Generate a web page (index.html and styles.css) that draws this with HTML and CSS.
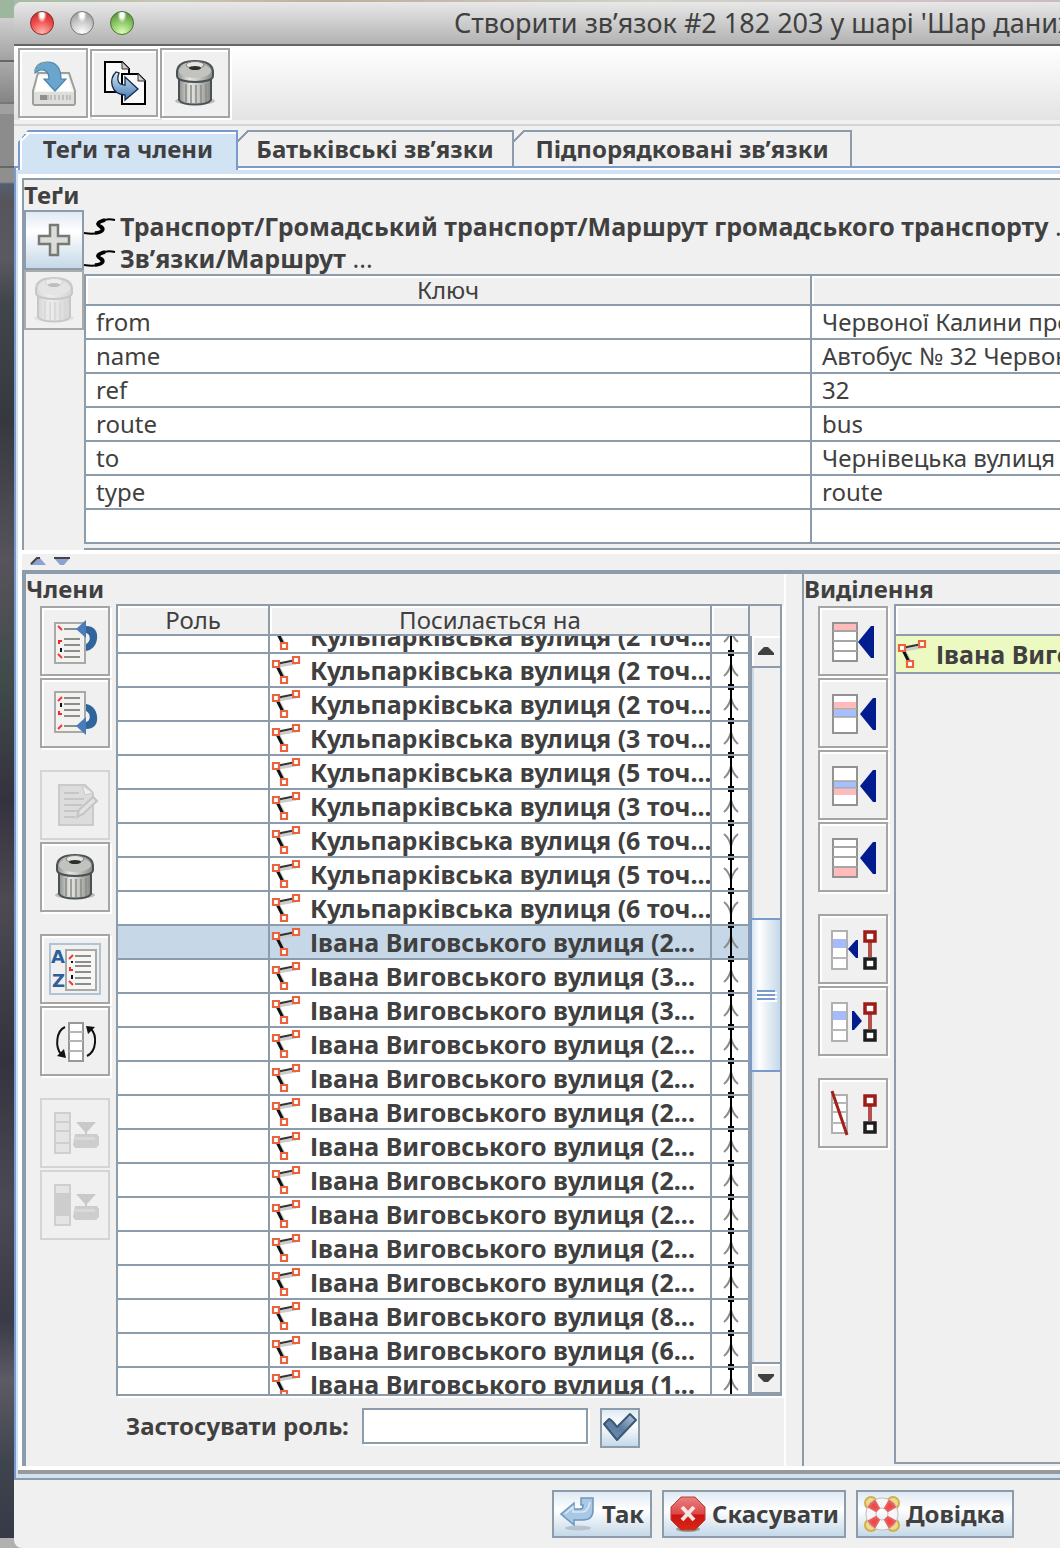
FILE: index.html
```html
<!DOCTYPE html>
<html lang="uk">
<head>
<meta charset="utf-8">
<title>Редактор зв’язків</title>
<link rel="stylesheet" href="styles.css">
</head>
<body>
<svg class="sprite" aria-hidden="true">
  <defs>
    <linearGradient id="metal" x1="0" x2="1" y1="0" y2="0"><stop offset="0" stop-color="#8d8f8a"/><stop offset=".35" stop-color="#e6e6e2"/><stop offset=".6" stop-color="#c8c9c4"/><stop offset="1" stop-color="#868883"/></linearGradient>
    <linearGradient id="blueArrow" x1="0" x2="0" y1="0" y2="1"><stop offset="0" stop-color="#dbe7f4"/><stop offset="1" stop-color="#3f78b4"/></linearGradient>
    <linearGradient id="redSign" x1="0" x2="0" y1="0" y2="1"><stop offset="0" stop-color="#e98080"/><stop offset=".5" stop-color="#dc4a4a"/><stop offset=".55" stop-color="#cc1414"/><stop offset="1" stop-color="#d62a10"/></linearGradient>
    <linearGradient id="tick" x1="1" x2="0" y1="0" y2="1"><stop offset="0" stop-color="#b5cbe0"/><stop offset=".5" stop-color="#5c7da0"/><stop offset="1" stop-color="#6f90b8"/></linearGradient>
  </defs>
  <symbol id="i-save" viewBox="0 0 48 48">
    <path d="M9 14H40L46 32V44Q46 46 44 46H6Q4 46 4 44V32Z" fill="#f4f4f3" stroke="#9d9f9a" stroke-width="2"/>
    <path d="M5 33H45V45H5Z" fill="#dededc"/><path d="M9 17H38L43 32H7Z" fill="#fff"/>
    <path d="M11 36h7v5h-7z" fill="#8f8f8d"/><path d="M19 36v5M22 36v5M26 36v5M30 36v5M34 36v5M38 36v5M41 36v5" stroke="#b2b2b0" stroke-width="1.5"/>
    <path d="M6 14C6 6 12 3 18 3C28 3 32 9 32 20H37L26 32L15 20H20C20 13 16 10 12 11C9 11 8 13 6 14Z" fill="#69a5cd" stroke="#4984b0" stroke-width="1.2"/>
    <path d="M6 12C8 5 13 3 18 4" fill="none" stroke="#8aa59c" stroke-width="2" stroke-dasharray="3 2"/>
  </symbol>
  <symbol id="i-copy" viewBox="0 0 48 48">
    <path d="M5 3H22L29 10V33H5Z" fill="#fafafa" stroke="#000" stroke-width="2"/><path d="M22 3V10H29" fill="#ccc" stroke="#333"/>
    <path d="M22 15H38L45 22V45H22Z" fill="#fafafa" stroke="#000" stroke-width="2"/><path d="M38 15V22H45" fill="#ccc" stroke="#333"/>
    <path d="M16 13C9 20 10 35 25 36V41L38 30L25 18V26C19 26 16 22 19 14Z" fill="url(#blueArrow)" stroke="#122c4a" stroke-width="1.3"/>
  </symbol>
  <symbol id="i-trash" viewBox="0 0 48 48">
    <ellipse cx="24" cy="42" rx="20" ry="4" fill="#000" opacity=".22"/>
    <path d="M8 18L8 41C12 47 36 47 40 41L40 18Z" fill="url(#metal)" stroke="#4a5256" stroke-width="2"/>
    <path d="M15 25V43M20 26V44M25 26V44M30 26V44M35 25V43" stroke="#8c8e89" stroke-width="1.6"/>
    <path d="M6 12C7 4 16 2 24 2S41 4 42 12V17C42 21 33 23 24 23S6 21 6 17Z" fill="url(#metal)" stroke="#4a5256" stroke-width="2"/>
    <ellipse cx="24" cy="12" rx="16" ry="7" fill="#c2c3be"/><ellipse cx="24" cy="6" rx="9" ry="3.500" fill="#e4e4e1" stroke="#7a7c77" stroke-width="1"/><ellipse cx="24" cy="9" rx="6" ry="2" fill="#2d2f2d"/>
  </symbol>
  <symbol id="i-plus" viewBox="0 0 48 48">
    <path d="M20 9h8v11h11v8H28v11h-8V28H9v-8h11z" fill="#dcdcd8" stroke="#777974" stroke-width="2.500"/>
  </symbol>
  <symbol id="i-route" viewBox="0 0 32 20">
    <path d="M0 17C6 18 14 18 17 15S10 9 15 6S27 3 31 4" fill="none" stroke="#000" stroke-width="2"/><path d="M11 17C21 16 20 12 16 10C12 8 14 6 21 4" fill="none" stroke="#000" stroke-width="3.500"/>
  </symbol>
  <symbol id="i-sheet" viewBox="0 0 48 48">
    <path d="M4 6H34V46H4Z" fill="#f2f3f0" stroke="#a9aaa6" stroke-width="2"/>
    <path d="M13 12H29M13 22H29M13 28H29M13 34H29M13 40H29" stroke="#8c8e89" stroke-width="2"/>
    <path d="M7 9l4 4M7 37l4 4" stroke="#f33" stroke-width="2"/><path d="M8 27v-3h3" stroke="#f22" stroke-width="2" fill="none"/><path d="M10 31v4" stroke="#111" stroke-width="2"/>
  </symbol>
  <symbol id="i-up" viewBox="0 0 48 48">
    <use href="#i-sheet" width="48" height="48"/>
    <path d="M35 9C44 9 47 15 46 22C45 29 41 33 35 34V27C40 25 40 17 35 16Z" fill="#2f649c"/><path d="M25 12L35 3V21Z" fill="#4b7cb5"/>
  </symbol>
  <symbol id="i-down" viewBox="0 0 48 48">
    <g transform="matrix(1 0 0 -1 0 49)"><use href="#i-up" width="48" height="48"/></g>
  </symbol>
  <symbol id="i-edit" viewBox="0 0 48 48">
    <path d="M8 4H34L42 12V44H8Z" fill="#dcdcdc" stroke="#cacaca" stroke-width="2"/>
    <path d="M13 12h15M13 18h20M13 24h18M13 30h15M13 36h11" stroke="#c6c6c6" stroke-width="2"/><path d="M31 4L34 14L42 12Z" fill="#eee" stroke="#cacaca"/>
    <path d="M26 36L28 29L42 16L46 20L32 33Z" fill="#e2e2e2" stroke="#c4c4c4" stroke-width="2"/>
  </symbol>
  <symbol id="i-sort" viewBox="-2 -2 54 54">
    <path d="M0 0H50V50H0Z" fill="#f0f0f0" stroke="#b0c3d3" stroke-width="2"/>
    <text x="1" y="19" class="glyph">A</text><text x="2" y="43" class="glyph">Z</text>
    <path d="M16 6H46V46H16Z" fill="#f6f6f4" stroke="#a9aaa6" stroke-width="2"/>
    <path d="M25 12H41M25 18H41M25 22H41M25 28H41M25 34H41M25 40H41" stroke="#8c8e89" stroke-width="2"/>
    <path d="M19 15l4-4M19 37l4 4" stroke="#f33" stroke-width="2"/><path d="M20 23v3h3" stroke="#f22" stroke-width="2" fill="none"/><path d="M22 17v2M22 31v4" stroke="#111" stroke-width="2"/>
  </symbol>
  <symbol id="i-reverse" viewBox="0 0 48 48">
    <path d="M18 6H32V44H18Z" fill="#fff" stroke="#989898" stroke-width="2"/><path d="M18 15H32M18 24H32M18 34H32" stroke="#b5b5b5" stroke-width="2"/>
    <path d="M14 10C5 14 4 30 10 37M36 39C46 34 46 18 40 12" fill="none" stroke="#111" stroke-width="2"/><path d="M15 41L6 39L13 32ZM35 9L44 10L37 17Z" fill="#111"/>
  </symbol>
  <symbol id="i-dl" viewBox="0 0 48 48">
    <path d="M4 4H19V44H4Z" fill="#e4e4e4" stroke="#cfcfcf" stroke-width="2"/><path d="M4 13H19M4 22H19M4 34H19" stroke="#cfcfcf" stroke-width="2"/>
    <path d="M25 13H45L36 23V26H34V23Z" fill="#c9c9c9"/><path d="M24 25H46L48 28V36L45 39H24L22 36Z" fill="#cdcdcd"/><path d="M24 28H44V31H24Z" fill="#d9d9d9"/>
  </symbol>
  <symbol id="i-dl-all" viewBox="0 0 48 48">
    <use href="#i-dl" width="48" height="48"/><path d="M4 12H19V35H4Z" fill="#cdcdcd"/>
  </symbol>
  <symbol id="i-frame" viewBox="0 0 48 48"><path d="M4 6H28V44H4Z" fill="#fff" stroke="#939393" stroke-width="2"/></symbol>
  <symbol id="i-first" viewBox="0 0 48 48">
    <use href="#i-frame" width="48" height="48"/><path d="M5 7H27V13H5Z" fill="#fbb"/><path d="M4 14H28M4 24H28M4 34H28" stroke="#a5a5a5" stroke-width="2"/><path d="M29 25L42 9H45V41H42Z" fill="#001c8e"/>
  </symbol>
  <symbol id="i-before" viewBox="0 0 48 48">
    <use href="#i-frame" width="48" height="48"/><path d="M5 13H27V20H5Z" fill="#fbb"/><path d="M5 21H27V28H5Z" fill="#a8bfff"/><path d="M4 20H28M4 28H28" stroke="#a5a5a5" stroke-width="1.500"/><path d="M31 25L44 9H47V41H44Z" fill="#001c8e"/>
  </symbol>
  <symbol id="i-after" viewBox="0 0 48 48">
    <use href="#i-frame" width="48" height="48"/><path d="M5 20H27V27H5Z" fill="#a8bfff"/><path d="M5 28H27V34H5Z" fill="#fbb"/><path d="M4 20H28M4 27H28" stroke="#a5a5a5" stroke-width="1.500"/><path d="M31 25L44 9H47V41H44Z" fill="#001c8e"/>
  </symbol>
  <symbol id="i-last" viewBox="0 0 48 48">
    <use href="#i-frame" width="48" height="48"/><path d="M5 35H27V43H5Z" fill="#fbb"/><path d="M4 14H28M4 24H28M4 34H28" stroke="#a5a5a5" stroke-width="2"/><path d="M31 25L44 9H47V41H44Z" fill="#001c8e"/>
  </symbol>
  <symbol id="i-nodes" viewBox="0 0 48 48">
    <path d="M3 6H18V44H3Z" fill="#fff" stroke="#b0b0b0" stroke-width="2"/>
    <path d="M41 17V32" stroke="#b5504a" stroke-width="4"/><path d="M36 7H46V16H36Z" fill="#fff" stroke="#9c1d17" stroke-width="3.500"/><path d="M36 34H46V43H36Z" fill="#fff" stroke="#1d1d1d" stroke-width="3.500"/>
  </symbol>
  <symbol id="i-sel-members" viewBox="0 0 48 48">
    <use href="#i-nodes" width="48" height="48"/><path d="M4 14H17V23H4Z" fill="#a5bbfb"/><path d="M3 33H18" stroke="#b8b8b8" stroke-width="2"/><path d="M19 24L27 15H29V33H27Z" fill="#001c8e"/>
  </symbol>
  <symbol id="i-sel-objects" viewBox="0 0 48 48">
    <use href="#i-nodes" width="48" height="48"/><path d="M4 14H17V23H4Z" fill="#a5bbfb"/><path d="M3 33H18" stroke="#b8b8b8" stroke-width="2"/><path d="M33 24L25 14H23V33H25Z" fill="#001c8e"/>
  </symbol>
  <symbol id="i-remove" viewBox="0 0 48 48">
    <use href="#i-nodes" width="48" height="48"/><path d="M3 14H18M3 23H18M3 34H18" stroke="#b8b8b8" stroke-width="2"/><path d="M3 2L18 46" stroke="#a3211c" stroke-width="3"/>
  </symbol>
  <symbol id="i-way" viewBox="0 0 32 32">
    <path d="M8 12L26 9M8 12L16 27" stroke="#ccc" stroke-width="3"/><path d="M6 10L26 6" stroke="#333" stroke-width="2"/><path d="M6 10L14 26" stroke="#111" stroke-width="3"/>
    <path d="M3 7H9V13H3ZM23 3H29V9H23ZM11 23H17V29H11Z" fill="#fff" stroke="#e8643c" stroke-width="2.200"/>
  </symbol>
  <symbol id="i-fwd" viewBox="0 0 36 32">
    <path d="M12 22Q17 18 19 10Q21 18 26 22" fill="none" stroke="#8b8b8b" stroke-width="2"/><path d="M18 0H20V32H18ZM16 0H22V2H16ZM16 30H22V32H16Z"/>
  </symbol>
  <symbol id="i-back" viewBox="0 0 36 32">
    <path d="M12 10Q17 14 19 22Q21 14 26 10" fill="none" stroke="#8b8b8b" stroke-width="2"/><path d="M18 0H20V32H18ZM16 0H22V2H16ZM16 30H22V32H16Z"/>
  </symbol>
  <symbol id="i-check" viewBox="0 0 36 36">
    <path d="M2 14L7 9Q11 11 15 17L28 4L34 10L15 30Z" fill="url(#tick)" stroke="#3c5875" stroke-width="2" stroke-linejoin="round"/>
  </symbol>
  <symbol id="i-ok" viewBox="0 0 36 36">
    <ellipse cx="18" cy="32" rx="13" ry="2.500" fill="#7b8894" opacity=".35"/>
    <path d="M1 18L14 7V13H20Q23 13 23 10V9H21V2H33V14Q33 24 23 24H14V29Z" fill="#a9c8e4" stroke="#6b96c0" stroke-width="1.500"/><path d="M5 18L13 11V16H22Q28 16 30 6" fill="none" stroke="#dce9f5" stroke-width="1.500"/>
  </symbol>
  <symbol id="i-cancel" viewBox="0 0 36 36">
    <ellipse cx="18" cy="33" rx="12" ry="3" fill="#333" opacity=".4"/>
    <path d="M11 1H25L35 11V24L25 34H11L1 24V11Z" fill="url(#redSign)" stroke="#c33a3a"/>
    <path d="M12 11L24 24M24 11L12 24" stroke="#f8e4e4" stroke-width="4"/>
  </symbol>
  <symbol id="i-help" viewBox="0 0 36 36">
    <g fill="#efd98a" stroke="#d0b04a" stroke-width="2"><circle cx="7" cy="7" r="6"/><circle cx="29" cy="7" r="6"/><circle cx="7" cy="29" r="6"/><circle cx="29" cy="29" r="6"/></g>
    <circle cx="18" cy="18" r="11" fill="none" stroke="#bdbdbd" stroke-width="11"/><circle cx="18" cy="18" r="11" fill="none" stroke="#f6f6f6" stroke-width="9"/>
    <path d="M5 11A15 15 0 0 1 11 5L15 12L12 15ZM25 5A15 15 0 0 1 31 11L24 15L21 12ZM31 25A15 15 0 0 1 25 31L21 24L24 21ZM11 31A15 15 0 0 1 5 25L12 21L15 24Z" fill="#f04848" stroke="#e86060" stroke-width="2"/>
  </symbol>
</svg>

<main class="window">
  <header class="titlebar">
    <div class="lights"><button class="light red" aria-label="Закрити"></button><button class="light gray" aria-label="Згорнути"></button><button class="light green" aria-label="Збільшити"></button></div>
    <h1>Створити зв’язок #2 182 203 у шарі 'Шар даних 1'</h1>
  </header>

  <div class="toolbar">
    <button class="tool" aria-label="Зберегти"><svg class="icon"><use href="#i-save"/></svg></button>
    <button class="tool compact" aria-label="Дублювати"><svg class="icon"><use href="#i-copy"/></svg></button>
    <button class="tool" aria-label="Вилучити"><svg class="icon"><use href="#i-trash"/></svg></button>
  </div>

  <nav class="tabs" role="tablist">
    <button class="tab active" role="tab" aria-selected="true">Теґи та члени</button>
    <button class="tab parents" role="tab" aria-selected="false">Батьківські зв’язки</button>
    <button class="tab children" role="tab" aria-selected="false">Підпорядковані зв’язки</button>
  </nav>

  <div class="frame">
    <div class="content">
      <section class="tags">
        <h2>Теґи</h2>
        <div class="tags-body">
          <div class="tag-tools">
            <button class="add" aria-label="Додати теґ"><svg class="icon"><use href="#i-plus"/></svg></button>
            <button class="add off" aria-label="Вилучити теґ" disabled><svg class="icon faded"><use href="#i-trash"/></svg></button>
          </div>
          <div class="tag-main">
            <ul class="presets">
              <li><svg class="route"><use href="#i-route"/></svg><a href="#"><b>Транспорт/Громадський транспорт/Маршрут громадського транспорту</b> ...</a></li>
              <li><svg class="route"><use href="#i-route"/></svg><a href="#"><b>Зв’язки/Маршрут</b> ...</a></li>
            </ul>
            <table class="tag-table">
              <colgroup><col class="c-key"><col></colgroup>
              <thead><tr><th>Ключ</th><th></th></tr></thead>
              <tbody>
                <tr><td>from</td><td>Червоної Калини проспект</td></tr>
                <tr><td>name</td><td>Автобус № 32 Червоної Калини</td></tr>
                <tr><td>ref</td><td>32</td></tr>
                <tr><td>route</td><td>bus</td></tr>
                <tr><td>to</td><td>Чернівецька вулиця</td></tr>
                <tr><td>type</td><td>route</td></tr>
                <tr><td></td><td></td></tr>
              </tbody>
            </table>
          </div>
        </div>
      </section>

      <div class="split" aria-hidden="true"><svg width="44" height="10" viewBox="0 0 44 10"><path d="M0 8L6 1H10L16 8Z" fill="#8ba3cf"/><path d="M1 7L7 1H10" fill="none" stroke="#444" stroke-width="2"/><path d="M24 1H40L34 8H30Z" fill="#8ba3cf"/><path d="M24 1H40" stroke="#444" stroke-width="2"/></svg></div>

      <div class="lower">
        <section class="members">
          <h2>Члени</h2>
          <div class="members-body">
            <div class="tools">
              <button class="tool" aria-label="Вгору"><svg class="icon"><use href="#i-up"/></svg></button>
              <button class="tool" aria-label="Вниз"><svg class="icon"><use href="#i-down"/></svg></button>
              <button class="tool start off" aria-label="Редагувати" disabled><svg class="icon"><use href="#i-edit"/></svg></button>
              <button class="tool" aria-label="Вилучити"><svg class="icon"><use href="#i-trash"/></svg></button>
              <button class="tool start" aria-label="Сортувати"><svg class="icon large"><use href="#i-sort"/></svg></button>
              <button class="tool" aria-label="Зворотний порядок"><svg class="icon"><use href="#i-reverse"/></svg></button>
              <button class="tool start off" aria-label="Завантажити членів" disabled><svg class="icon"><use href="#i-dl"/></svg></button>
              <button class="tool off" aria-label="Завантажити неповні" disabled><svg class="icon"><use href="#i-dl-all"/></svg></button>
            </div>
            <div class="list">
              <table class="member-table">
                <colgroup><col class="c-role"><col><col class="c-link"></colgroup>
                <thead><tr><th>Роль</th><th>Посилається на</th><th></th></tr></thead>
                <tbody>
                  <tr class="cut-top"><td></td><td><div class="ref"><svg class="way"><use href="#i-way"/></svg><span>Кульпарківська вулиця (2 точ...</span></div></td><td><div class="dir"><svg class="link"><use href="#i-fwd"/></svg></div></td></tr>
                  <tr><td></td><td><div class="ref"><svg class="way"><use href="#i-way"/></svg><span>Кульпарківська вулиця (2 точ...</span></div></td><td><div class="dir"><svg class="link"><use href="#i-fwd"/></svg></div></td></tr>
                  <tr><td></td><td><div class="ref"><svg class="way"><use href="#i-way"/></svg><span>Кульпарківська вулиця (2 точ...</span></div></td><td><div class="dir"><svg class="link"><use href="#i-fwd"/></svg></div></td></tr>
                  <tr><td></td><td><div class="ref"><svg class="way"><use href="#i-way"/></svg><span>Кульпарківська вулиця (3 точ...</span></div></td><td><div class="dir"><svg class="link"><use href="#i-fwd"/></svg></div></td></tr>
                  <tr><td></td><td><div class="ref"><svg class="way"><use href="#i-way"/></svg><span>Кульпарківська вулиця (5 точ...</span></div></td><td><div class="dir"><svg class="link"><use href="#i-fwd"/></svg></div></td></tr>
                  <tr><td></td><td><div class="ref"><svg class="way"><use href="#i-way"/></svg><span>Кульпарківська вулиця (3 точ...</span></div></td><td><div class="dir"><svg class="link"><use href="#i-fwd"/></svg></div></td></tr>
                  <tr><td></td><td><div class="ref"><svg class="way"><use href="#i-way"/></svg><span>Кульпарківська вулиця (6 точ...</span></div></td><td><div class="dir"><svg class="link"><use href="#i-back"/></svg></div></td></tr>
                  <tr><td></td><td><div class="ref"><svg class="way"><use href="#i-way"/></svg><span>Кульпарківська вулиця (5 точ...</span></div></td><td><div class="dir"><svg class="link"><use href="#i-back"/></svg></div></td></tr>
                  <tr><td></td><td><div class="ref"><svg class="way"><use href="#i-way"/></svg><span>Кульпарківська вулиця (6 точ...</span></div></td><td><div class="dir"><svg class="link"><use href="#i-back"/></svg></div></td></tr>
                  <tr class="selected"><td></td><td><div class="ref"><svg class="way"><use href="#i-way"/></svg><span>Івана Виговського вулиця (2...</span></div></td><td><div class="dir"><svg class="link"><use href="#i-fwd"/></svg></div></td></tr>
                  <tr><td></td><td><div class="ref"><svg class="way"><use href="#i-way"/></svg><span>Івана Виговського вулиця (3...</span></div></td><td><div class="dir"><svg class="link"><use href="#i-fwd"/></svg></div></td></tr>
                  <tr><td></td><td><div class="ref"><svg class="way"><use href="#i-way"/></svg><span>Івана Виговського вулиця (3...</span></div></td><td><div class="dir"><svg class="link"><use href="#i-fwd"/></svg></div></td></tr>
                  <tr><td></td><td><div class="ref"><svg class="way"><use href="#i-way"/></svg><span>Івана Виговського вулиця (2...</span></div></td><td><div class="dir"><svg class="link"><use href="#i-fwd"/></svg></div></td></tr>
                  <tr><td></td><td><div class="ref"><svg class="way"><use href="#i-way"/></svg><span>Івана Виговського вулиця (2...</span></div></td><td><div class="dir"><svg class="link"><use href="#i-fwd"/></svg></div></td></tr>
                  <tr><td></td><td><div class="ref"><svg class="way"><use href="#i-way"/></svg><span>Івана Виговського вулиця (2...</span></div></td><td><div class="dir"><svg class="link"><use href="#i-fwd"/></svg></div></td></tr>
                  <tr><td></td><td><div class="ref"><svg class="way"><use href="#i-way"/></svg><span>Івана Виговського вулиця (2...</span></div></td><td><div class="dir"><svg class="link"><use href="#i-fwd"/></svg></div></td></tr>
                  <tr><td></td><td><div class="ref"><svg class="way"><use href="#i-way"/></svg><span>Івана Виговського вулиця (2...</span></div></td><td><div class="dir"><svg class="link"><use href="#i-fwd"/></svg></div></td></tr>
                  <tr><td></td><td><div class="ref"><svg class="way"><use href="#i-way"/></svg><span>Івана Виговського вулиця (2...</span></div></td><td><div class="dir"><svg class="link"><use href="#i-fwd"/></svg></div></td></tr>
                  <tr><td></td><td><div class="ref"><svg class="way"><use href="#i-way"/></svg><span>Івана Виговського вулиця (2...</span></div></td><td><div class="dir"><svg class="link"><use href="#i-fwd"/></svg></div></td></tr>
                  <tr><td></td><td><div class="ref"><svg class="way"><use href="#i-way"/></svg><span>Івана Виговського вулиця (2...</span></div></td><td><div class="dir"><svg class="link"><use href="#i-fwd"/></svg></div></td></tr>
                  <tr><td></td><td><div class="ref"><svg class="way"><use href="#i-way"/></svg><span>Івана Виговського вулиця (8...</span></div></td><td><div class="dir"><svg class="link"><use href="#i-fwd"/></svg></div></td></tr>
                  <tr><td></td><td><div class="ref"><svg class="way"><use href="#i-way"/></svg><span>Івана Виговського вулиця (6...</span></div></td><td><div class="dir"><svg class="link"><use href="#i-fwd"/></svg></div></td></tr>
                  <tr class="cut-bottom"><td></td><td><div class="ref"><svg class="way"><use href="#i-way"/></svg><span>Івана Виговського вулиця (1...</span></div></td><td><div class="dir"><svg class="link"><use href="#i-fwd"/></svg></div></td></tr>
                </tbody>
              </table>
              <div class="scroll">
                <div class="corner"></div>
                <button class="arrow up" aria-label="Прокрутити вгору"><svg width="16" height="8" viewBox="0 0 16 8"><path d="M0 8V6L6 0H10L16 6V8Z" fill="#404040"/></svg></button>
                <div class="track"><div class="thumb"><i></i><i></i><i></i></div></div>
                <button class="arrow down" aria-label="Прокрутити вниз"><svg width="16" height="8" viewBox="0 0 16 8"><path d="M0 0V2L6 8H10L16 2V0Z" fill="#404040"/></svg></button>
              </div>
            </div>
          </div>
          <form class="apply">
            <label for="role">Застосувати роль:</label>
            <input id="role" type="text">
            <button type="button" class="blue" aria-label="Застосувати"><svg class="small-icon"><use href="#i-check"/></svg></button>
          </form>
        </section>

        <div class="vsplit"></div>

        <section class="selection">
          <h2>Виділення</h2>
          <div class="selection-body">
            <div class="tools">
              <button class="tool" aria-label="Додати на початок"><svg class="icon"><use href="#i-first"/></svg></button>
              <button class="tool" aria-label="Додати перед"><svg class="icon"><use href="#i-before"/></svg></button>
              <button class="tool" aria-label="Додати після"><svg class="icon"><use href="#i-after"/></svg></button>
              <button class="tool" aria-label="Додати в кінець"><svg class="icon"><use href="#i-last"/></svg></button>
              <button class="tool start" aria-label="Виділити членів"><svg class="icon"><use href="#i-sel-members"/></svg></button>
              <button class="tool" aria-label="Виділити об’єкти"><svg class="icon"><use href="#i-sel-objects"/></svg></button>
              <button class="tool start" aria-label="Вилучити виділені"><svg class="icon"><use href="#i-remove"/></svg></button>
            </div>
            <div class="picked">
              <div class="picked-head"></div>
              <div class="ref picked-row"><svg class="way"><use href="#i-way"/></svg><span>Івана Виговського</span></div>
            </div>
          </div>
        </section>
      </div>
    </div>
  </div>

  <footer class="actions">
    <button class="blue ok"><svg class="small-icon"><use href="#i-ok"/></svg>Так</button>
    <button class="blue cancel"><svg class="small-icon"><use href="#i-cancel"/></svg>Скасувати</button>
    <button class="blue help"><svg class="small-icon"><use href="#i-help"/></svg>Довідка</button>
  </footer>
</main>
</body>
</html>
```
FILE: styles.css
```css
* { box-sizing: border-box; }

:root {
  --line: #8c9cab;
  --edge: #7a99cc;
  --pale: #cfe1f2;
  --face: #f0f0f0;
}

body {
  margin: 0;
  padding: 2px 0 0 14px;
  min-height: 100vh;
  display: flex;
  overflow: hidden;
  font: 24px/32px "Noto Sans", sans-serif;
  color: #404040;
  background:
    linear-gradient(90deg, #a5bda2, #c9c6b4 15%, #bcae9c 30%, #d3d2cb 60%, #cbb) 14px 0 / 100% 10px no-repeat,
    linear-gradient(#9db79f 0 18px, #cfcfcf 18px, #a2a2a2 60px, #666 60px 62px, #aaa 62px, #858585 102px, #777 102px 104px, #a0a0a0 104px 114px, #8c8c8c 114px 166px, #666 166px 168px, #8f8f8f 168px 182px, #536070 184px, #57555c 200px, #5a5a61 260px, #40474c 300px, #35393f 420px, #57545b 560px, #404b4a 680px, #34323f 800px, #4d4a53 900px, #33343f 1060px, #4b4955 1200px, #3a3b48 1320px, #5c5b66 1380px, #3f454e 1460px, #363a47 1538px, #b1b1b1 1538px);
}

button, input { font: inherit; color: inherit; margin: 0; padding: 0; border-radius: 0; }
h1, h2, ul { margin: 0; padding: 0; }
table { border-spacing: 0; table-layout: fixed; width: 100%; }
.sprite { position: absolute; width: 0; height: 0; }
.glyph { font: bold 18px "DejaVu Sans", sans-serif; fill: #2f5f9a; }
svg { display: block; flex: none; }
.icon { width: 48px; height: 48px; }
.large { width: 54px; height: 54px; }
.small-icon { width: 36px; height: 36px; }
.faded { opacity: .25; filter: grayscale(1); }

.window {
  flex: 1;
  min-width: 0;
  display: flex;
  flex-direction: column;
  background: var(--face);
  border-radius: 8px 0 0 8px;
  overflow: hidden;
}

.titlebar {
  display: flex;
  align-items: center;
  gap: 320px;
  height: 44px;
  padding-left: 16px;
  border-bottom: 2px solid #666;
  background: linear-gradient(#e8e8e8, #d2d2d2 40%, #b2b2b2);
}
.titlebar h1 { font-size: 27px; font-weight: 400; white-space: nowrap; }
.lights { display: flex; gap: 16px; }
.light { width: 24px; height: 24px; border: 1px solid #777; border-radius: 50%; }
.red { border-color: #8f2a2c; background: radial-gradient(ellipse at 50% 12%, #fff 0 12%, transparent 30%), radial-gradient(circle at 50% 95%, #ffb9b0, #ee4a48 55%, #a82a2c); }
.gray { background: radial-gradient(ellipse at 50% 12%, #fff 0 12%, transparent 30%), radial-gradient(circle at 50% 95%, #fff, #c4c4c4 55%, #8d8d8d); }
.green { border-color: #45762c; background: radial-gradient(ellipse at 50% 12%, #fff 0 12%, transparent 30%), radial-gradient(circle at 50% 95%, #dcffb4, #85c061 55%, #4a7d30); }

.toolbar {
  display: flex;
  align-items: center;
  gap: 2px;
  height: 80px;
  padding: 0 4px 4px;
  border-bottom: 2px solid #d4d4d4;
  background: linear-gradient(#fff, #f2f2f2 45%, #e3e3e3 95%, #f0f0f0 95%);
}
.tool {
  display: flex;
  align-items: center;
  justify-content: center;
  width: 70px;
  height: 70px;
  border: 2px solid #a5a5a5;
  background: var(--face);
  box-shadow: inset 2px 2px #fff, 2px 2px #fff;
}
.compact { width: 68px; height: 68px; }
.tools { display: flex; flex-direction: column; gap: 2px; padding-top: 2px; }
.start { margin-top: 20px; }
.tool.off { border-color: #d4d4d4; box-shadow: none; }

.tabs { display: flex; height: 38px; margin-top: 4px; padding-left: 4px; border-bottom: 2px solid var(--edge); }
.tab {
  height: 36px;
  padding-top: 2px;
  border: 0 solid var(--line);
  border-right-width: 2px;
  font-weight: 700;
  white-space: nowrap;
  background:
    linear-gradient(var(--line), var(--line)) 10px 0 / 100% 2px no-repeat,
    linear-gradient(135deg, var(--face) 7px, var(--line) 7px 9px, var(--face) 9px);
}
.tab.active {
  width: 220px;
  height: 40px;
  padding: 0 0 4px;
  border: 2px solid var(--edge);
  border-bottom: 0;
  background: linear-gradient(135deg, var(--edge) 9px, #fff 9px 11px, #d2e3f3 11px) border-box;
  box-shadow: inset 2px 2px #fff;
  clip-path: polygon(10px 0, 100% 0, 100% 100%, 0 100%, 0 12px);
}
.parents { width: 276px; }
.children { width: 338px; }

.frame {
  flex: 1;
  display: flex;
  border-left: 2px solid var(--edge);
  border-bottom: 2px solid var(--line);
  padding: 2px 0 4px 2px;
  background: linear-gradient(#fff 2px, var(--pale) 2px);
}
.content {
  flex: 1;
  min-width: 0;
  display: flex;
  flex-direction: column;
  margin-top: 4px;
  padding: 4px 0 4px 4px;
  background: #fff;
  border-bottom: 4px solid #999;
}
h2 { font-size: 24px; line-height: 30px; font-weight: 700; }

.tags { border: 2px solid var(--line); border-width: 2px 0 0 2px; background: var(--face); }
.tags-body { display: flex; }
.tag-tools { width: 60px; }
.add {
  display: flex;
  align-items: center;
  justify-content: center;
  width: 60px;
  height: 60px;
  border: 2px solid var(--line);
  background: linear-gradient(#dfeaf4, #fff 35%, #c5d8e8);
}
.add.off { border-color: #aaa; background: var(--face); }
.tag-main { flex: 1; min-width: 0; padding-bottom: 4px; border-bottom: 2px solid var(--line); }
.presets { list-style: none; font-size: 25px; }
.presets li { display: flex; align-items: center; gap: 4px; height: 32px; white-space: nowrap; }
.presets a { color: inherit; text-decoration: none; }
.route { width: 32px; height: 20px; }
th { height: 30px; padding: 0; font-weight: 400; line-height: 28px; border-bottom: 2px solid var(--line); border-right: 2px solid var(--line); box-shadow: inset 2px 2px #fff; }
.tag-table { border: 2px solid var(--line); border-width: 2px 0 0 2px; }
.tag-table td { height: 34px; padding: 0 10px; white-space: nowrap; overflow: hidden; background: #fff; border-bottom: 2px solid var(--line); border-right: 2px solid var(--line); }
.tag-table td:last-child, .tag-table th:last-child { border-right: 0; padding-right: 0; }
.c-key { width: 726px; }

.split { height: 20px; padding: 3px 8px 0; background: var(--face); border-top: 4px solid #fff; }

.lower { flex: 1; display: flex; border-top: 4px solid var(--line); background: var(--face); }
.members { width: 764px; border-left: 4px solid var(--line); border-right: 2px solid #fff; }
.members h2, .selection h2 { height: 30px; }
.members-body { display: flex; gap: 6px; padding: 0 2px 0 14px; }
.list { flex: 1; display: flex; border: 2px solid var(--line); box-shadow: 2px 2px #fff; }
.member-table { flex: 1; }
.member-table td { height: 34px; padding: 0; overflow: hidden; vertical-align: top; background: #fff; border-bottom: 2px solid var(--line); border-right: 2px solid var(--line); }
.c-role { width: 152px; }
.c-link { width: 38px; }
.ref { display: flex; align-items: center; gap: 8px; height: 32px; font-size: 25px; font-weight: 700; white-space: nowrap; overflow: hidden; }
.ref span { flex: 1; min-width: 0; overflow: hidden; line-height: 32px; }
.dir { height: 32px; overflow: hidden; display: flex; }
.way { width: 32px; height: 32px; }
.link { width: 36px; height: 32px; }
.selected td { background: #c6d8e7; }
.member-table .cut-top td { height: 18px; }
.cut-top .ref, .cut-top .dir { height: 16px; align-items: flex-end; }
.member-table .cut-bottom td { height: 26px; border-bottom: 0; }
.cut-bottom .ref, .cut-bottom .dir { height: 26px; align-items: flex-start; }

.scroll { width: 30px; display: flex; flex-direction: column; box-shadow: inset 2px 0 var(--line); }
.corner { height: 30px; background: var(--face); }
.arrow { display: flex; align-items: center; justify-content: center; height: 32px; margin-left: 2px; border: 0; border-bottom: 2px solid var(--line); background: var(--face); box-shadow: inset 2px 2px #fff; }
.arrow.down { border-top: 2px solid var(--line); }
.track { flex: 1; padding-top: 250px; margin-left: 2px; border-left: 2px solid #c5d8e8; }
.thumb {
  display: flex;
  flex-direction: column;
  align-items: center;
  justify-content: center;
  gap: 2px;
  height: 154px;
  margin-left: -4px;
  border: 2px solid var(--edge);
  border-right: 0;
  background: linear-gradient(90deg, #d5e4f1, #fff 25%, #c5d8e8);
}
.thumb i { width: 18px; height: 2px; background: var(--edge); box-shadow: 2px 2px #fff; }

.apply { display: flex; align-items: flex-start; gap: 10px; padding: 12px 0 18px 100px; font-weight: 700; }
.apply label { width: 226px; line-height: 36px; white-space: nowrap; }
.apply input { width: 226px; height: 36px; border: 2px solid var(--line); background: #fff; box-shadow: 2px 2px #fff; }
.blue { display: flex; align-items: center; border: 2px solid var(--line); font-weight: 700; background: linear-gradient(#dfeaf4, #fff 40%, #c5d8e8); }
.apply .blue { width: 40px; height: 40px; margin-left: 2px; }

.vsplit { width: 16px; }
.selection { flex: 1; min-width: 0; display: flex; flex-direction: column; border-left: 2px solid var(--line); }
.selection-body { flex: 1; display: flex; gap: 6px; padding: 0 0 2px 14px; }
.picked { flex: 1; min-width: 0; border: 2px solid var(--line); border-right: 0; }
.picked-head { height: 30px; border-bottom: 2px solid var(--line); box-shadow: inset 2px 2px #fff; }
.picked-row { height: 38px; border-bottom: 2px solid var(--line); background: #ecf9c1; }

.actions { display: flex; justify-content: flex-end; gap: 10px; padding: 10px 46px 10px 0; }
.actions .blue { height: 48px; gap: 6px; padding: 0 0 0 6px; white-space: nowrap; }
.ok { width: 100px; }
.cancel { width: 184px; }
.help { width: 158px; }
```
